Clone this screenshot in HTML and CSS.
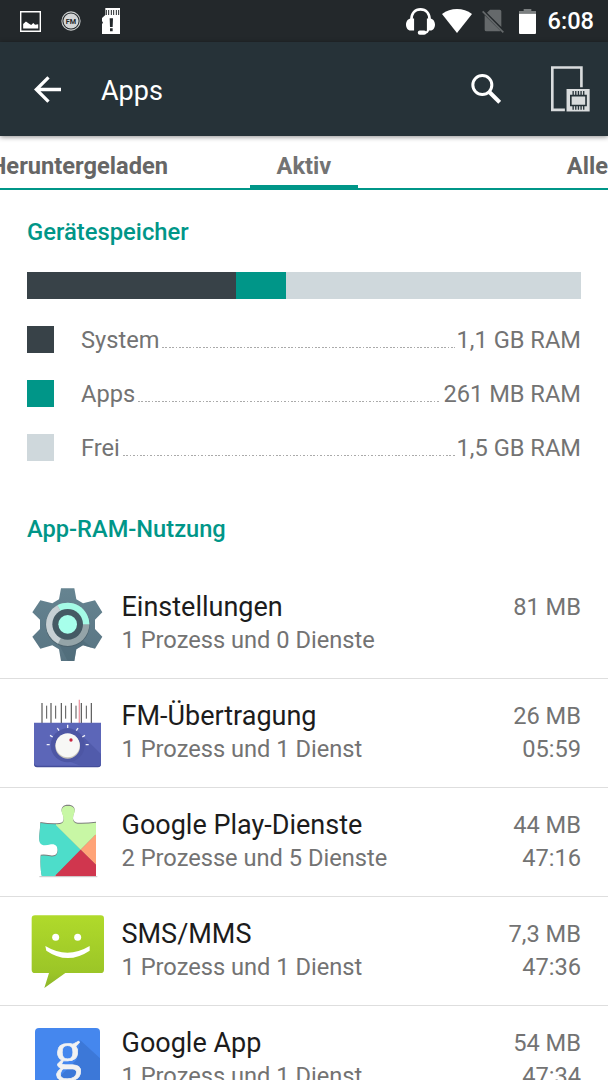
FILE: index.html
```
<!DOCTYPE html>
<html lang="de">
<head>
    <meta charset="utf-8">
    <title>Apps</title>
    <link rel="stylesheet" href="styles.css">
</head>
<body>
    <div class="screen">
        <div class="status-bar">
            <div class="status-left">
                <svg class="ic-picture" viewBox="0 0 60 60">
                    <path d="M2 2h56v56H2z" fill="none" stroke="#fff" stroke-width="4"/>
                    <path d="M9 50V37l8-7 8 6 7 4 6-6 5 5 9-1v12z" fill="#fff"/>
                </svg>
                <svg class="ic-fm" viewBox="0 0 58 58">
                    <circle cx="29" cy="29" r="26.500" fill="none" stroke="#c9cccd" stroke-width="3"/>
                    <circle cx="29" cy="29" r="22" fill="#d4d6d7"/>
                    <text x="29" y="37" text-anchor="middle" class="fm-text">FM</text>
                </svg>
                <svg class="ic-sd" viewBox="0 0 54 78">
                    <path d="M10 0h44v78H0V48l3-4-3-5V30l10-9z" fill="#fff"/>
                    <path d="M13 6v15M20 6v15M28 6v15M35 6v15M43 6v15M50 6v15" stroke="#23282b" stroke-width="3"/>
                    <path d="M23 31h10l-1 26h-8zM24 61h8v9h-8z" fill="#23282b"/>
                </svg>
            </div>
            <div class="status-right">
                <svg class="ic-headset" viewBox="0 0 86 80">
                    <path d="M16 35C16 15 27 4 43 4s27 11 27 31" fill="none" stroke="#fff" stroke-width="8"/>
                    <path d="M24 31v36H14C5 67 0 58 0 49s5-17 14-18zM62 31v36h10c9 0 14-9 14-18s-5-17-14-18z" fill="#fff"/>
                    <path d="M66 62c0 9-6 12-14 12" fill="none" stroke="#fff" stroke-width="6"/>
                    <rect x="35" y="67" width="25" height="12" rx="6" fill="#fff"/>
                </svg>
                <svg class="ic-wifi" viewBox="0 0 90 72">
                    <path d="M0 15C26-5 64-5 90 15L45 72z" fill="#fff"/>
                </svg>
                <svg class="ic-nosim" viewBox="0 0 66 72">
                    <path d="M24 2h29q5 0 5 5v47L15 11zM8 19l48 47q-1 1-3 1H13q-5 0-5-5z" fill="#65696b"/>
                    <path d="M2 7l62 63" stroke="#65696b" stroke-width="5"/>
                </svg>
                <svg class="ic-battery" viewBox="0 0 51 75">
                    <path d="M14 0h23v6h14v8H0V6h14z" fill="#7b7f80"/>
                    <path d="M0 14h51v58q0 3-3 3H3q-3 0-3-3z" fill="#fff"/>
                </svg>
                <span class="clock">6:08</span>
            </div>
        </div>

        <div class="toolbar">
            <svg class="ic-back" viewBox="0 0 82 80">
                <path d="M82 40H6M44 3L7 40l37 37" fill="none" stroke="#fff" stroke-width="10"/>
            </svg>
            <h1>Apps</h1>
            <svg class="ic-search" viewBox="0 0 88 90">
                <circle cx="33" cy="33" r="28.500" fill="none" stroke="#fff" stroke-width="9"/>
                <path d="M54 54l31 31" stroke="#fff" stroke-width="12"/>
            </svg>
            <svg class="ic-memory" viewBox="0 0 118 138">
                <path d="M92 64V4H4v128h38" fill="none" stroke="#d9dcdd" stroke-width="8"/>
                <path d="M47 69h70v68H47z" fill="#d9dcdd"/>
                <path d="M60 89h46v30H60z" fill="none" stroke="#263238" stroke-width="5"/>
                <path d="M67 75v12M75 75v12M83 75v12M91 75v12M99 75v12M67 120v12M75 120v12M83 120v12M91 120v12M99 120v12" stroke="#263238" stroke-width="4"/>
            </svg>
        </div>

        <div class="tabs">
            <div class="tab tab-prev">Heruntergeladen</div>
            <div class="tab tab-active">Aktiv</div>
            <div class="tab tab-next">Alle</div>
        </div>

        <div class="memory">
            <h2>Gerätespeicher</h2>
            <div class="bar">
                <div class="system" style="width: 37.8%"></div>
                <div class="apps" style="width: 9%"></div>
            </div>
            <div class="legend">
                <span class="swatch system"></span>
                <span class="label">System</span>
                <span class="dots"></span>
                <span class="label">1,1 GB RAM</span>
            </div>
            <div class="legend">
                <span class="swatch apps"></span>
                <span class="label">Apps</span>
                <span class="dots"></span>
                <span class="label">261 MB RAM</span>
            </div>
            <div class="legend">
                <span class="swatch free"></span>
                <span class="label">Frei</span>
                <span class="dots"></span>
                <span class="label">1,5 GB RAM</span>
            </div>
        </div>

        <h2 class="list-title">App-RAM-Nutzung</h2>

        <div class="app">
            <svg class="app-icon" viewBox="21 40 243 243">
                <defs>
                    <linearGradient id="gear" x1="0" y1="0" x2="0" y2="1">
                        <stop offset="0" stop-color="#668491"/>
                        <stop offset="1" stop-color="#587482"/>
                    </linearGradient>
                </defs>
                <path d="M123 53h40l6 33 20 12 36-9 22 36-22 22v28l22 23-22 36-36-10-20 12-6 35h-40l-6-35-20-12-36 10-24-36 23-23v-28l-23-22 24-36 36 9 20-12z" fill="url(#gear)"/>
                <path d="M187 208l30 24-28-8-20 12-6 35h-20l-27-52z" fill="#4d6977" opacity=".6"/>
                <circle cx="143" cy="163" r="66" fill="#4c626d"/>
                <circle cx="143" cy="161" r="65" fill="#94a4a8"/>
                <path d="M143 161L112 104A65 65 0 0 1 208 161z" fill="#a4fbe6"/>
                <path d="M143 161L112 104A65 65 0 0 0 114 219z" fill="#c7d0d4"/>
                <circle cx="143" cy="161" r="46" fill="#455a64"/>
                <circle cx="143" cy="161" r="28" fill="#a7ffeb"/>
            </svg>
            <div class="info">
                <div class="name">Einstellungen</div>
                <div class="detail">1 Prozess und 0 Dienste</div>
            </div>
            <div class="usage">
                <div>81 MB</div>
            </div>
        </div>

        <div class="app">
            <svg class="app-icon" viewBox="21 22 243 243">
                <path d="M66 52v60M93 52v60M124 52v60M154 52v60M184 52v60M214 52v60" stroke="#555" stroke-width="3.500"/>
                <path d="M80 60v39M107 60v39M137 60v39M168 60v39M199 60v39" stroke="#555" stroke-width="3"/>
                <path d="M178 42v70" stroke="#ee9ba5" stroke-width="4"/>
                <path d="M42 111h201v124q0 9-9 9H51q-9 0-9-9z" fill="#5c66b8"/>
                <path d="M42 232q0 13 9 13h183q9 0 9-13-2 8-9 8H51q-7 0-9-8z" fill="#444e9a"/>
                <path d="M181 144l62 61v30q0 5-9 5h-53l-71-27z" fill="#515bab"/>
                <circle cx="143" cy="179" r="51" fill="#4d56a4"/>
                <path d="M80 177h9M90 149l8 5M112 127l5 8M143 117v10M174 127l-5 8M195 149l-8 5M206 177h-9" stroke="#f1f2fa" stroke-width="4"/>
                <circle cx="143" cy="182" r="37" fill="#c8c5ba"/>
                <circle cx="143" cy="179" r="36" fill="#f7f7f5"/>
                <circle cx="153" cy="163" r="5" fill="#c9243f"/>
            </svg>
            <div class="info">
                <div class="name">FM-Übertragung</div>
                <div class="detail">1 Prozess und 1 Dienst</div>
            </div>
            <div class="usage">
                <div>26 MB</div>
                <div>05:59</div>
            </div>
        </div>

        <div class="app">
            <svg class="app-icon" viewBox="21 20 243 243">
                <defs>
                    <clipPath id="puzzle">
                        <path id="puzzle-shape" d="M61 83q30 5 58 3 13-2 12-15-1-8-5-17c-5-15 5-23 18-23s24 8 19 22q-5 11-4 19 1 12 14 13 27 1 55-3v161H65q-5-25-3-62 12-2 29 2c16 3 22-5 22-18s-8-20-20-18c-13 3-27 6-33-4-5-10 0-30 1-60z"/>
                    </clipPath>
                </defs>
                <use href="#puzzle-shape" y="-3" fill="#7d7d7d"/>
                <path d="M58 244h174" stroke="#aaa" stroke-width="2"/>
                <g clip-path="url(#puzzle)">
                    <path d="M50 20h60v70l72 73-80 81H50z" fill="#4dddca"/>
                    <path d="M108 20v70l74 73 60-60V20z" fill="#c8f7a5"/>
                    <path d="M182 163l50-50v100z" fill="#ffa377"/>
                    <path d="M182 163l-80 82h130v-33z" fill="#d0364e"/>
                </g>
            </svg>
            <div class="info">
                <div class="name">Google Play-Dienste</div>
                <div class="detail">2 Prozesse und 5 Dienste</div>
            </div>
            <div class="usage">
                <div>44 MB</div>
                <div>47:16</div>
            </div>
        </div>

        <div class="app">
            <svg class="app-icon" viewBox="21 32 243 243">
                <defs>
                    <linearGradient id="sms" x1="0" y1="0" x2="0" y2="1">
                        <stop offset="0" stop-color="#b0da2b"/>
                        <stop offset=".8" stop-color="#9bc527"/>
                        <stop offset="1" stop-color="#8db52b"/>
                    </linearGradient>
                </defs>
                <path d="M45 45h197q10 0 10 10v153q0 10-10 10H136l-63 45 14-45H45q-10 0-10-10V55q0-10 10-10z" fill="url(#sms)"/>
                <circle cx="107" cy="111" r="10.500" fill="#fff"/>
                <circle cx="173" cy="111" r="10.500" fill="#fff"/>
                <path d="M76 137q66 40 133 0v14q-66 44-130 0z" fill="#fff"/>
            </svg>
            <div class="info">
                <div class="name">SMS/MMS</div>
                <div class="detail">1 Prozess und 1 Dienst</div>
            </div>
            <div class="usage">
                <div>7,3 MB</div>
                <div>47:36</div>
            </div>
        </div>

        <div class="app">
            <svg class="app-icon" viewBox="21 359 243 243">
                <rect x="45" y="383" width="195" height="195" rx="12" fill="#4587ee"/>
                <path d="M181 420l59 54v104H150l-40-40 60-60z" fill="#3c78d8"/>
                <text x="144" y="505" text-anchor="middle" class="g-text">g</text>
            </svg>
            <div class="info">
                <div class="name">Google App</div>
                <div class="detail">1 Prozess und 1 Dienst</div>
            </div>
            <div class="usage">
                <div>54 MB</div>
                <div>47:34</div>
            </div>
        </div>
    </div>
</body>
</html>
```

FILE: styles.css
```
body {
    margin: 0;
    font-family: Roboto, "Liberation Sans", sans-serif;
    font-size: 23.65px;
    color: #737373;
    background: #fff;
}
h1, h2 {
    margin: 0;
}
svg {
    display: block;
    flex: none;
}
.screen {
    width: 608px;
    height: 1080px;
    overflow: hidden;
}

/* status bar */
.status-bar {
    display: flex;
    justify-content: space-between;
    height: 42px;
    padding: 0 14px 0 20px;
    background: #23282b;
}
.status-left,
.status-right {
    display: flex;
    align-items: center;
}
.ic-picture {
    width: 21px;
    height: 21px;
    margin-right: 20px;
}
.ic-fm {
    width: 20px;
    height: 20px;
    margin-right: 21px;
}
.fm-text {
    font-size: 21px;
    font-weight: 700;
    fill: #23282b;
}
.ic-sd {
    width: 18px;
    height: 26px;
}
.ic-headset {
    width: 29px;
    height: 27px;
    margin-right: 7px;
}
.ic-wifi {
    width: 30px;
    height: 24px;
    margin-right: 10px;
}
.ic-nosim {
    width: 22px;
    height: 24px;
    margin-right: 15px;
}
.ic-battery {
    width: 17px;
    height: 25px;
    margin-right: 12px;
}
.clock {
    font-size: 23.6px;
    font-weight: 500;
    color: #fff;
    line-height: 44px;
}

/* toolbar */
.toolbar {
    position: relative;
    display: flex;
    align-items: center;
    height: 94px;
    padding: 0 18px 0 34px;
    background: #263238;
    box-shadow: 0 1px 5px rgba(0, 0, 0, 0.45);
}
.ic-back {
    width: 27px;
    height: 27px;
}
.toolbar h1 {
    flex: 1;
    margin-left: 40px;
    padding-top: 4px;
    font-size: 27px;
    font-weight: 400;
    color: #fff;
}
.ic-search {
    width: 30px;
    height: 30px;
    margin-right: 50px;
}
.ic-memory {
    width: 39px;
    height: 46px;
}

/* tabs */
.tabs {
    display: flex;
    height: 54px;
    box-sizing: border-box;
    background: linear-gradient(#009688, #009688) bottom / 100% 2px no-repeat;
    overflow: hidden;
}
.tab {
    display: flex;
    box-sizing: border-box;
    font-weight: 700;
    line-height: 60px;
    color: #666;
}
.tab-prev {
    width: 250px;
    justify-content: flex-end;
    padding-right: 82px;
}
.tab-active {
    width: 108px;
    justify-content: center;
    border-bottom: 5px solid #009688;
    color: #737373;
}
.tab-next {
    padding-left: 209px;
}

/* memory overview */
h2 {
    font-size: 23.65px;
    font-weight: 500;
    line-height: 28px;
    color: #009688;
}
.memory {
    padding: 28px 27px 0;
}
.memory h2 {
    font-size: 23.8px;
}
.bar {
    display: flex;
    height: 27px;
    margin: 26px 0;
    background: #cfd8dc;
}
.system {
    background: #384248;
}
.apps {
    background: #009688;
}
.free {
    background: #cfd8dc;
}
.legend {
    display: flex;
    align-items: center;
    height: 28px;
    margin-bottom: 26px;
}
.label {
    padding-top: 2px;
    line-height: 28px;
}
.swatch {
    width: 27px;
    height: 27px;
    margin-right: 27px;
}
.dots {
    flex: 1;
    height: 1px;
    margin: 17px 2px 0 3px;
    background: repeating-linear-gradient(90deg, #aaa 0 1.7px, transparent 1.7px 3.4px);
}

/* app list */
.list-title {
    margin: 54px 27px 27px;
}
.app {
    display: flex;
    height: 109px;
    box-sizing: border-box;
    padding: 14px 27px 0;
    border-bottom: 1px solid #dedede;
}
.app-icon {
    width: 81px;
    height: 81px;
    margin-right: 13.5px;
}
.g-text {
    font-family: "Liberation Serif", serif;
    font-size: 165px;
    fill: #f2f2f2;
    stroke: #f2f2f2;
    stroke-width: 2px;
}
.info {
    flex: 1;
    padding-top: 6px;
}
.name {
    font-size: 27px;
    line-height: 34px;
    color: #1c1c1c;
}
.detail {
    line-height: 33px;
}
.usage {
    padding-top: 7px;
    line-height: 33px;
    text-align: right;
}
```
